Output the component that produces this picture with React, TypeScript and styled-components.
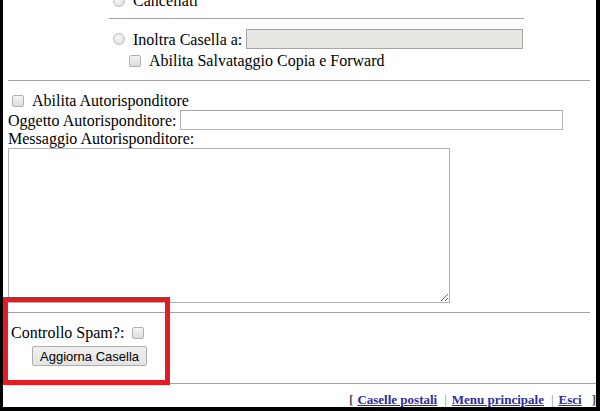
import React from 'react';
import styled, { createGlobalStyle } from 'styled-components';

const GlobalStyle = createGlobalStyle`
  html, body {
    margin: 0;
    padding: 0;
    background: #000;
  }
  body {
    font-family: 'Liberation Serif', 'Times New Roman', serif;
    font-size: 16px;
    color: #000;
  }
`;

const Panel = styled.div`
  position: relative;
  width: 593px;
  height: 407px;
  margin-left: 3px;
  background: #fff;
  overflow: hidden;
  display: flex;
  flex-direction: column;
`;

const Section = styled.div<{ $left: number; $width: number }>`
  margin-left: ${(p) => p.$left}px;
  width: ${(p) => p.$width}px;
  display: flex;
  flex-direction: column;
`;

const Row = styled.div<{ $h: number; $top?: number; $indent?: number }>`
  display: flex;
  align-items: center;
  height: ${(p) => p.$h}px;
  margin-top: ${(p) => p.$top || 0}px;
  padding-left: ${(p) => p.$indent || 0}px;
  line-height: 19px;
  white-space: nowrap;
`;

const Rule = styled.div<{ $top: number; $inset?: number; $right?: number }>`
  height: 0;
  border-top: 1px solid #a3a3a3;
  margin-top: ${(p) => p.$top}px;
  margin-left: ${(p) => p.$inset || 0}px;
  margin-right: ${(p) => p.$right || 0}px;
`;

const Radio = styled.input.attrs({ type: 'radio' })`
  appearance: none;
  margin: 0 8px 0 0;
  width: 12px;
  height: 12px;
  border-radius: 50%;
  border: 1px solid #bcbcbc;
  background: radial-gradient(circle at 45% 40%, #f7f7f7 0%, #dcdcdc 100%);
  box-sizing: border-box;
  flex: none;
`;

const Check = styled.input.attrs({ type: 'checkbox' })<{ $before?: number; $after?: number }>`
  appearance: none;
  margin: 0 ${(p) => (p.$after === undefined ? 8 : p.$after)}px 0 ${(p) => p.$before || 0}px;
  width: 12px;
  height: 12px;
  border-radius: 2px;
  border: 1px solid #b0b0b0;
  background: linear-gradient(#f4f4f4, #dcdcdc);
  box-sizing: border-box;
  flex: none;
`;

const TextField = styled.input<{ $width: number }>`
  box-sizing: border-box;
  width: ${(p) => p.$width}px;
  height: 20px;
  margin: 0 0 0 4px;
  padding: 1px 2px;
  font: inherit;
  border: 1px solid #b4b4b4;
  border-top-color: #a8a8a8;
  background: #fff;
  outline: none;

  &:disabled {
    background: #e8e7e3;
    border-color: #a6a6a6;
  }
`;

const Label = styled.div`
  height: 18px;
  line-height: 18px;
  margin-left: 5px;
  white-space: nowrap;
`;

const MessageArea = styled.textarea`
  display: block;
  box-sizing: border-box;
  width: 442px;
  height: 155px;
  margin: 0 0 0 5px;
  padding: 2px;
  border: 1px solid #b0b0b0;
  font: inherit;
  outline: none;
`;

const Button = styled.button`
  box-sizing: border-box;
  height: 20px;
  width: 115px;
  margin: 4px 0 0 29px;
  padding: 0 7px;
  align-self: flex-start;
  font-family: 'Liberation Sans', Arial, sans-serif;
  font-size: 13px;
  color: #000;
  border: 1px solid #adadad;
  border-radius: 2px;
  background: linear-gradient(#f0f0f0, #e3e3e3);
`;

const Footer = styled.div`
  margin-top: 8px;
  height: 15px;
  line-height: 15px;
  text-align: right;
  padding-right: 0;
  font-size: 13px;
  font-weight: bold;
  color: #555;
  white-space: nowrap;
`;

const FooterLink = styled.a`
  color: #2c2ca3;
  text-decoration: underline;
`;

const Sep = styled.span<{ $l: number; $r: number }>`
  color: #8a8a8a;
  font-weight: normal;
  margin: 0 ${(p) => p.$r}px 0 ${(p) => p.$l}px;
`;

const Highlight = styled.div`
  position: absolute;
  left: 0;
  top: 297px;
  width: 167px;
  height: 88px;
  box-sizing: border-box;
  border: 5px solid #e31d25;
  pointer-events: none;
`;

const App = () => {
  return (
    <>
      <GlobalStyle />
      <Panel>
        <Section $left={106} $width={415}>
          <Row $h={19} $top={-9} $indent={4}>
            <Radio name="azione" />
            <span>Cancellati</span>
          </Row>
          <Rule $top={8} />
          <Row $h={22} $top={9} $indent={4}>
            <Radio name="azione" />
            <span>Inoltra Casella a:</span>
            <TextField $width={277} disabled />
          </Row>
          <Row $h={19} $top={1} $indent={20}>
            <Check />
            <span>Abilita Salvataggio Copia e Forward</span>
          </Row>
        </Section>

        <Rule $top={10} $inset={5} $right={6} />

        <Row $h={19} $top={10} $indent={9}>
          <Check />
          <span>Abilita Autorisponditore</span>
        </Row>
        <Row $h={20} $indent={5}>
          <span>Oggetto Autorisponditore:</span>
          <TextField $width={383} />
        </Row>
        <Label>Messaggio Autorisponditore:</Label>
        <MessageArea />

        <Rule $top={9} $inset={5} $right={6} />

        <Row $h={19} $top={10} $indent={8}>
          <span>Controllo Spam?:</span>
          <Check $before={8} $after={0} />
        </Row>
        <Button type="button">Aggiorna Casella</Button>

        <Rule $top={17} />

        <Footer>
          [<Sep $l={4} $r={0} />
          <FooterLink href="#">Caselle postali</FooterLink>
          <Sep $l={7} $r={5}>|</Sep>
          <FooterLink href="#">Menu principale</FooterLink>
          <Sep $l={7} $r={5}>|</Sep>
          <FooterLink href="#">Esci</FooterLink>
          <Sep $l={10} $r={0} />]
        </Footer>

        <Highlight />
      </Panel>
    </>
  );
};

export default App;
